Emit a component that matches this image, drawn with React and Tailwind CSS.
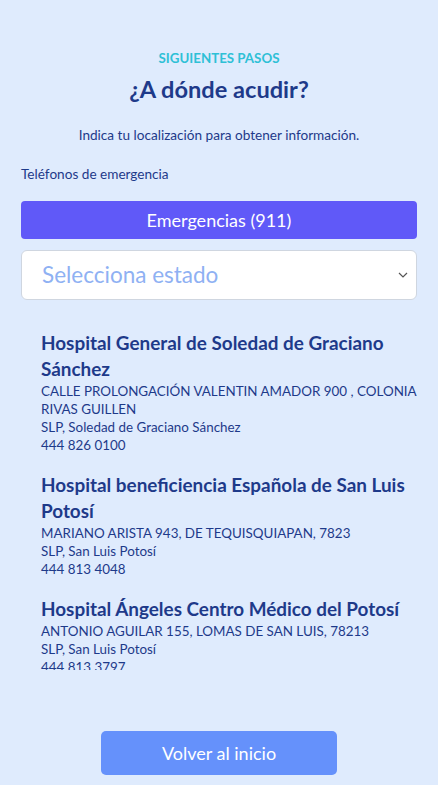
import React from "react";

const hospitals = [
  {
    name: "Hospital General de Soledad de Graciano Sánchez",
    address: "CALLE PROLONGACIÓN VALENTIN AMADOR 900 , COLONIA RIVAS GUILLEN",
    city: "SLP, Soledad de Graciano Sánchez",
    phone: "444 826 0100",
  },
  {
    name: "Hospital beneficiencia Española de San Luis Potosí",
    address: "MARIANO ARISTA 943, DE TEQUISQUIAPAN, 7823",
    city: "SLP, San Luis Potosí",
    phone: "444 813 4048",
  },
  {
    name: "Hospital Ángeles Centro Médico del Potosí",
    address: "ANTONIO AGUILAR 155, LOMAS DE SAN LUIS, 78213",
    city: "SLP, San Luis Potosí",
    phone: "444 813 3797",
  },
  {
    name: "Hospital Central Dr. Ignacio Morones Prieto",
    address: "AV. VENUSTIANO CARRANZA 2395, ZONA UNIVERSITARIA",
    city: "SLP, San Luis Potosí",
    phone: "444 834 2700",
  },
];

export default function App() {
  return (
    <div
      className="w-[438px] h-[785px] bg-[#dfebfd] flex flex-col overflow-hidden text-[#1e3a8a]"
      style={{ fontFamily: '"Lato", "Open Sans", sans-serif' }}
    >
      <div className="px-[21px] pt-[49px] flex flex-col shrink-0">
        <p className="text-center text-[13.3px] font-bold text-[#2ec0d6] leading-[18px]">
          SIGUIENTES PASOS
        </p>
        <h1 className="text-center text-[23.6px] font-bold leading-[30px] mt-[7px] text-[#1e3a8a]">
          ¿A dónde acudir?
        </h1>
        <p className="text-center text-[13.6px] leading-[18px] mt-[22px] text-[#1e3a8a]">
          Indica tu localización para obtener información.
        </p>
        <p className="text-[13.6px] leading-[18px] mt-[21px] text-[#1e3a8a]">
          Teléfonos de emergencia
        </p>
        <button className="mt-[18px] h-[38px] w-full rounded-[4px] bg-[#6059f8] text-white text-[18px] leading-[38px]">
          Emergencias (911)
        </button>
        <div className="mt-[11px] h-[50px] w-full rounded-[6px] bg-white border border-[#cfd6e0] flex items-center justify-between pl-[20px] pr-[8px]">
          <span className="text-[22.5px] text-[#8fb1f3]">Selecciona estado</span>
          <svg width="10" height="6" viewBox="0 0 10 6" fill="none">
            <path d="M1 1l4 4 4-4" stroke="#555" strokeWidth="1.2" />
          </svg>
        </div>
      </div>
      <div className="mt-[30px] h-[340px] shrink-0 overflow-hidden pl-[41px] pr-[18px] flex flex-col gap-[18px]">
        {hospitals.map((h) => (
          <div key={h.name} className="flex flex-col shrink-0">
            <p className="text-[18.9px] font-bold leading-[26px] text-[#1e3a8a] pr-[6px]">
              {h.name}
            </p>
            <p className="text-[13.4px] leading-[18px] text-[#1e3a8a]">{h.address}</p>
            <p className="text-[13.4px] leading-[18px] text-[#1e3a8a]">{h.city}</p>
            <p className="text-[13.4px] leading-[18px] text-[#1e3a8a]">{h.phone}</p>
          </div>
        ))}
      </div>
      <div className="flex justify-center mt-[61px] shrink-0">
        <button className="w-[236px] h-[44px] rounded-[5px] bg-[#6591fb] text-white text-[18px]">
          Volver al inicio
        </button>
      </div>
    </div>
  );
}
